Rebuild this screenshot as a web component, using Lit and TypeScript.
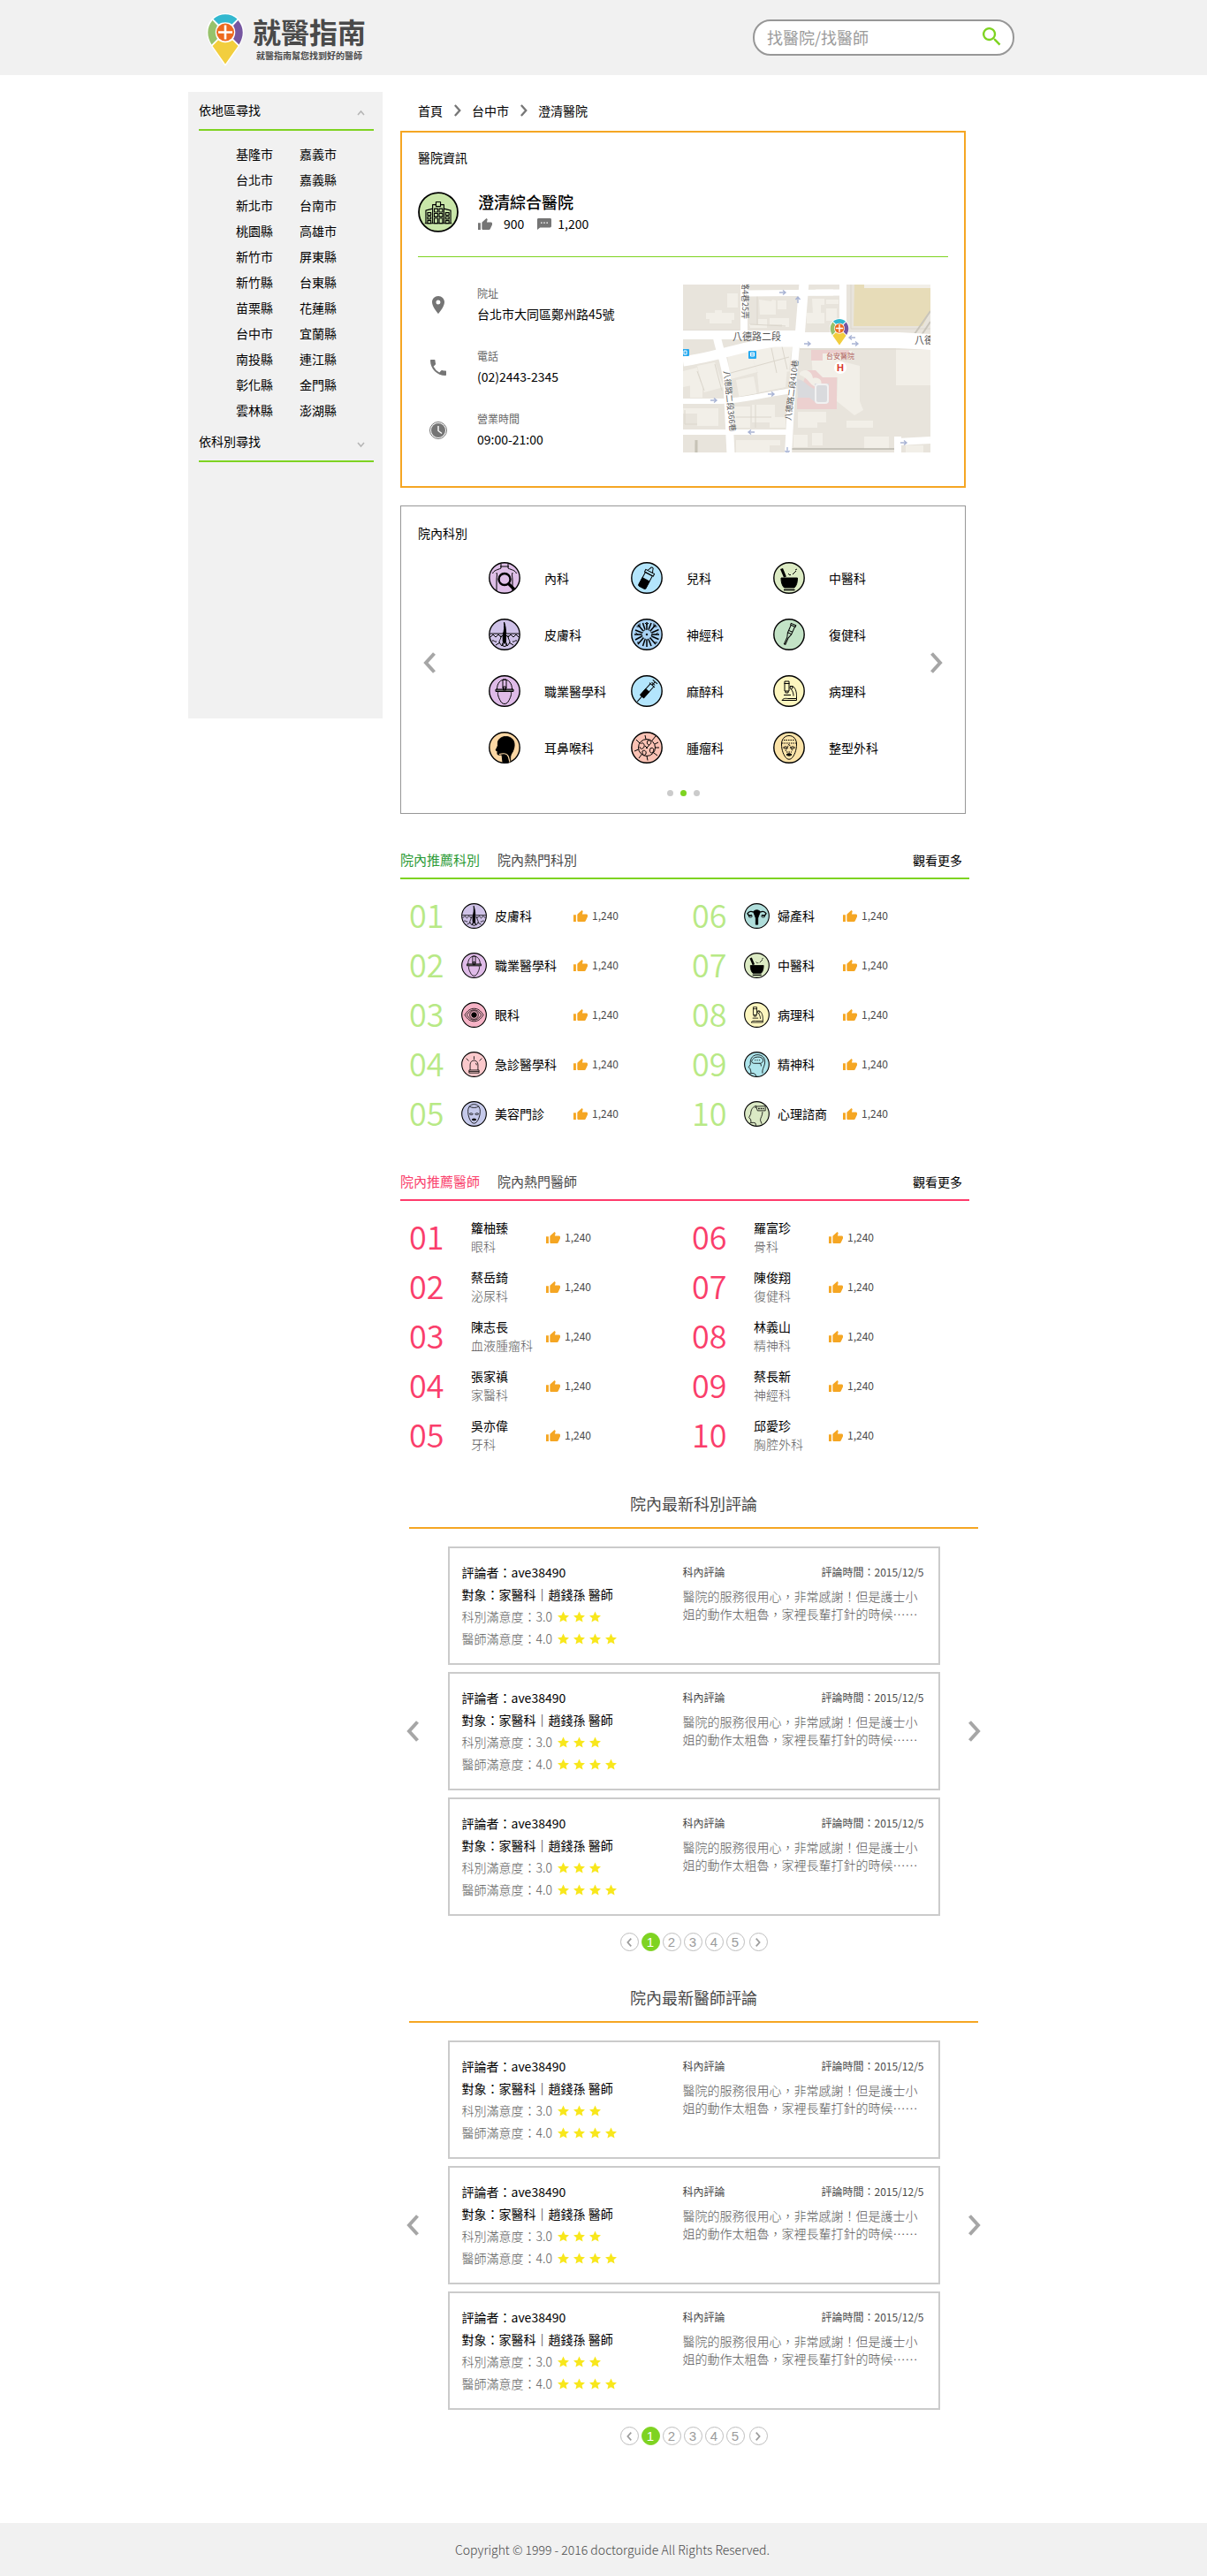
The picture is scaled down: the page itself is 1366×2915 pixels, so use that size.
import { LitElement, html, css, svg, nothing } from "lit";
import type { SVGTemplateResult } from "lit";
import { customElement, property, state } from "lit/decorators.js";
import { classMap } from "lit/directives/class-map.js";

const base = css`
  *, *::before, *::after { box-sizing: border-box; }
  button { font: inherit; color: inherit; background: none; border: 0; padding: 0; margin: 0; cursor: pointer; }
  a { color: inherit; text-decoration: none; }
  h1, h2, p, ul, ol, dl, dd { margin: 0; padding: 0; font-weight: inherit; font-size: inherit; }
  ul, ol { list-style: none; }
  svg { display: block; flex: none; }
`;

/* ---------- department glyphs, all on a 36 x 36 disc ---------- */

interface Glyph { fill: string; art: SVGTemplateResult; }

const faceArt = svg`
  <path d="M18 4.500c-5 0-8.500 4-8.500 9.500 0 7.500 2.500 12.500 5 15.500 2 2.300 5 2.300 7 0 2.500-3 5-8 5-15.500 0-5.500-3.500-9.500-8.500-9.500z"/>
  <path d="M11.500 18c1.500-1.500 4-1.500 5 .3-1.500 1.200-3.600 1.200-5-.3zM24.500 18c-1.500-1.500-4-1.500-5 .3 1.500 1.200 3.600 1.200 5-.3z"/>
  <path d="M15 26c1.500-1.600 4.500-1.600 6 0-1.500 1.500-4.500 1.500-6 0z" fill="#000"/>`;

const glyphs: Record<string, Glyph> = {
  internal: { fill: "#dfbfe8", art: svg`
    <path d="M14 2v5c-4 2-8 2-9.500 6M22 2v5c4 2 8 2 9.500 6M13 5h10M9 33V20c0-3 1-5 0-8M27 33V20c0-3-1-5 0-8"/>
    <circle cx="18" cy="19.500" r="6.500" stroke-width="2.400"/><path d="M22.500 24.500l6.500 6.500" stroke-width="3.200"/>` },
  pediatric: { fill: "#b3e5fc", art: svg`
    <g transform="rotate(28 18 18)"><path d="M13.500 13h9v15.500q0 1.500-1.500 1.500h-6q-1.500 0-1.500-1.500z"/>
    <path d="M13.500 20h9v9q0 1-1.500 1h-6q-1.500 0-1.500-1z" fill="#000"/><path d="M12.500 10h11v3h-11zM15 10c0-2 1.500-2 1.500-4.500q1.500-2 3 0c0 2.500 1.500 2.500 1.500 4.500"/></g>` },
  chinese: { fill: "#dcebc4", art: svg`
    <path d="M9 18h18.500c0 5-1 8.500-3.500 11H12.500C10 26.500 9 23 9 18z" fill="#000"/><path d="M12 31.500h12.500" stroke-width="1.600"/>
    <path d="M9.500 7.500l4 9.500" stroke-width="3.200"/><path d="M17 13l2 2 1-1M22 14l4-4M25 9l2-1"/>` },
  skin: { fill: "#cfc2e8", art: svg`
    <path d="M1.500 17h14l1-1M34.500 17h-14l-1-1M2 21l3-3 3 3 3-3 3 3 2-2M34 21l-3-3-3 3-3-3-3 3-2-2M4 25c2-1 3 2 5 1M32 25c-2-1-3 2-5 1M8 30l5-3M28 30l-5-3"/>
    <path d="M17.500 4c1.800 5 2.300 10 2 14v8l-1.500 2-1.800-2v-8c1.500-4 1.800-9 1.300-14z" fill="#000"/>
    <path d="M14 19c0 5-2 5-2 8l3 4 3-4 3 4 3-4c0-3-2-3-2-8"/><circle cx="18" cy="29" r="2.500"/>` },
  neuro: { fill: "#a9d2f5", art: svg`
    <circle cx="18" cy="18" r="5.500" stroke-dasharray="2 1"/><circle cx="18" cy="18" r=".8" fill="#000"/>
    <g stroke-width="1.500"><path d="M18 12V4M18 24v8M12 18H4M24 18h8M14 14L8 7M22 14l6-7M14 22l-6 7M22 22l6 7M16 12.500L13.500 5M20 12.500L23 5M12.500 16L5 13M12.500 20L5 24M23.500 16l8-3.500M23.500 20l8 3.500M16 23.500L13.500 31M20 23.500l3 7.500"/></g>
    <path d="M9.500 9H6.500M10 9V5.500M26.500 9h3M26 9V5.500M8 18l-2.500-2M28 18l2.500-2M9.500 27H7M26.500 27H30M18 7l-2-2M18 7l2-2"/>` },
  rehab: { fill: "#c3e3c6", art: svg`
    <g transform="rotate(24 18 18)"><path d="M15 5.500h6v1.800h-6zM15.700 7.300v9.500l1.600 5V30h1.500v-8.200l1.600-5V7.300M15.700 14h4.700M15.700 16.500h4.700M16.800 30h2.500"/></g>` },
  worker: { fill: "#dfbbe8", art: svg`
    <path d="M9.500 16c0-7 4-11 8.500-11s8.500 4 8.500 11M16 5h4v10h-4z"/><path d="M8 16h20v2.500H8z" fill="#666"/>
    <path d="M11 19c-1.500 1 0 6 2 9.500 1 2 2.500 4 5 4s4-2 5-4c2-3.500 3.500-8.500 2-9.500"/><path d="M16.500 13h3v4h-3z"/>` },
  anesthesia: { fill: "#b3e5fc", art: svg`
    <g transform="rotate(42 18 18)"><path d="M15.500 9h5v17h-5zM18 26v8M18 9V4M14.500 4h7M14 9h8"/><path d="M15.500 17h5v9h-5z" fill="#000"/><path d="M15.500 7h5"/></g>` },
  pathology: { fill: "#fdf6bf", art: svg`
    <path d="M13 7h5v11h-5zM12.500 9.500h6M14 18v2h3v-2M19 12.500h3c3 1.500 4.500 6 4.500 11v3M20 15.500c2 2 3 5 3 8M10 28.500c2-3 5-2 7-2h9.500v2zM12 22.500h8"/><circle cx="20.500" cy="14" r="1.500"/>` },
  ent: { fill: "#fbd7a4", art: svg`
    <path d="M28 10c-3-6-14-6-17 0-1.300 3 0 5-1 7l-2 4 2 .8v3.700c1 1 3 .5 5 .5l1 8.500c3 1 7 .5 9-.5-1-6 0-8 2-11 2-4 3-9 1-13z" fill="#000"/>
    <path d="M12 25.500c6-1.500 9-1 10.500 3l1.500 6" stroke="#fbd7a4" stroke-width="1.200"/>` },
  tumor: { fill: "#fbc2b4", art: svg`
    <circle cx="18" cy="18" r="9.500"/><path d="M11 14c2-3 5 0 4 3s-5 3-5 0M19 10c3-1 5 2 3 4s-5 0-3-4M22 19c3-2 5 1 3 4s-5-1-3-4M13 22c2-2 5 0 4 3s-5 1-4-3M16 16l3 3M17 19l4-4"/>
    <path d="M17 8.500L16 4M24 10l4-5M27.500 18H32M26 24l4 3M18 27.500l1 5M12 26l-3 4M8.500 20L4 22M10 13L6 9M27 14l4-2"/>` },
  plastic: { fill: "#fbe3a8", art: svg`${faceArt}<path d="M10 13h16M12 9.500h12M14 22l4-8 4 8M15 23h6M12 24l-1 1M24 24l1 1" stroke-dasharray="1.500 1"/>` },
  eye: { fill: "#f6b3c6", art: svg`
    <path d="M5 18c4-6.500 8-9 13-9s9 2.500 13 9c-4 6.500-8 9-13 9s-9-2.500-13-9z"/><path d="M8 18c3-5 6-7 10-7s7 2 10 7c-3 5-6 7-10 7s-7-2-10-7z"/>
    <circle cx="18" cy="18" r="6"/><circle cx="18" cy="18" r="3.500" fill="#000"/>` },
  emergency: { fill: "#fbc9cc", art: svg`
    <path d="M12.500 26v-7.500c0-8 11-8 11 0V26M11 26h14v4H11zM11 28h14M18 11V6.500M10.500 13L7 9.500M25.500 13L29 9.500M20 16q1.500 1 1.500 3"/>` },
  beauty: { fill: "#c5c9ea", art: svg`${faceArt}<path d="M11 7c4 3 10 3 14 0"/>` },
  gyne: { fill: "#b0dedb", art: svg`
    <path d="M13 12c3-3 7-3 10 0l-2 5-1.500 4v9h-3v-9L15 17z" fill="#000"/><path d="M13 12.500c-3-1.500-6-1-8 2 1 3 4 4 6 2M23 12.500c3-1.500 6-1 8 2-1 3-4 4-6 2" stroke-width="1.700"/>
    <ellipse cx="9" cy="18.500" rx="2.500" ry="1.500"/><ellipse cx="27" cy="18.500" rx="2.500" ry="1.500"/>` },
  psych: { fill: "#aee5ec", art: svg`
    <path d="M8 32v-1c3-1 6-1 8 1l1 2.500M10 30.500L9.500 27l-1-3-2-2 2.500-4C8 9 13 4 20 4.500c7 .5 10.500 6 9 13-1 5-4 8-3 13"/>
    <path d="M13 10c2-3 11-3.500 13 0 2 3 0 6-3 6.500h-9c-4-.5-4-4-1-6.500z"/><path d="M15 12h9" stroke-dasharray="1.500 1.500" /><path d="M22 16.500q3 1 2 4"/>` },
  counsel: { fill: "#dbe9c5", art: svg`
    <path d="M8 32v-1c3-1 7-1 8 0l1 3.500M10 30.500L9.500 26l-2.500-3 2.500-5c0-6 3-10.500 8-11.500M26 15c0 6-3 8-3 12l2 5"/>
    <path d="M17 7.500l13-.5v6.500H19z"/><path d="M20 10.500h8" stroke-width="1.800" stroke-dasharray="2 1.200"/><path d="M15 9h2"/>` },
  hospital: { fill: "#c9e6a9", art: svg`
    <g stroke-width=".9"><path d="M13 27.500V11.500h3M23 27.500V11.500h-3M16 9h4v4h-4zM7 27.500v-11l6-1.500M29 27.500v-11l-6-1.500M6 28h24"/>
    <path d="M14.500 15h3v3h-3zM18.800 15h3v3h-3zM14.500 19.200h3v3h-3zM18.800 19.200h3v3h-3zM14.500 23.500h3V28h-3zM18.800 23.500h3V28h-3zM8.500 18.500h3v2.200h-3zM8.500 22h3v2.200h-3zM8.500 25.500h3V28h-3zM24.500 18.500h3v2.200h-3zM24.500 22h3v2.200h-3zM24.500 25.500h3V28h-3z"/></g>` },
};

@customElement("dept-icon")
export class DeptIcon extends LitElement {
  @property() name = "internal";
  static styles = css`
    :host { display: block; flex: none; }
    .disc { display: block; width: 100%; height: 100%; fill: none; stroke: #000; stroke-width: 1; stroke-linejoin: round; }
  `;
  render() {
    const g = glyphs[this.name];
    return html`<svg class="disc" viewBox="0 0 36 36" aria-hidden="true">
      <circle cx="18" cy="18" r="17.200" fill=${g.fill} stroke-width="1.400"></circle>${g.art}
    </svg>`;
  }
}

/* ---------- small shared drawings ---------- */

const thumb = html`<svg class="thumb" width="16" height="13" viewBox="1 1 22 20" preserveAspectRatio="none" aria-hidden="true">
  <path fill="currentColor" d="M1 21h4V9H1v12zm22-11c0-1.100-.9-2-2-2h-6.310l.95-4.570.03-.32c0-.41-.17-.79-.44-1.060L14.170 1 7.590 7.590C7.220 7.950 7 8.450 7 9v10c0 1.100.9 2 2 2h9c.83 0 1.540-.5 1.840-1.220l3.020-7.050c.09-.23.14-.47.14-.73V10z"/>
</svg>`;

const chevron = (dir: "left" | "right", w: number, h: number) => html`<svg width=${w} height=${h} viewBox="0 0 14 24" aria-hidden="true">
  <path fill="none" stroke="currentColor" stroke-width="4" d=${dir === "left" ? "M12.500 1.500L3 12l9.500 10.500" : "M1.500 1.500L11 12 1.500 22.500"}/>
</svg>`;

const pinArt = svg`
  <path fill="#fff" d="M21 0C9.500 0 0 9 0 21c0 6 2 11 6 17.500L21 60l15-21.500C40 32 42 27 42 21 42 9 32.500 0 21 0z"/>
  <path fill="#33b8cf" d="M7.500 6.500C15-.5 27-.5 34.500 6.500L28.500 12.500c-4-3-11-3-15 0z"/>
  <path fill="#97c26b" d="M6.500 8C0 15.500-.5 26 5.500 35.500L12 29c-3-5-3-10 0-15z"/>
  <path fill="#7656a0" d="M35.500 8C42 15.500 42.500 26 36.500 35.500L30 29c3-5 3-10 0-15z"/>
  <path fill="#f2ce3e" d="M6.500 37L13 30.500c5 3.500 11 3.500 16 0l6.500 6.500L21 57.500z"/>
  <circle cx="21" cy="21.500" r="10" fill="#ee6a1f"/><path stroke="#fff" stroke-width="2.600" d="M21 13.500v16M13 21.500h16"/>`;

const star = html`<svg width="13" height="13" viewBox="0 0 24 24" aria-hidden="true"><path fill="#f8e71c" d="M12 1l3.600 7.800 8.400.8-6.300 5.600L19.500 23 12 18.800 4.500 23l1.800-7.800L0 9.600l8.400-.8z"/></svg>`;

/* ---------- map ---------- */

const arrow = (x: number, y: number, r: number) => svg`<path transform="translate(${x} ${y}) rotate(${r})" d="M-4 0h7M0-2.500L3 0 0 2.500" fill="none" stroke="#a9b4d4" stroke-width="1.400"/>`;

const mapArt = html`<svg class="map" viewBox="0 0 280 190" role="img" aria-label="台安醫院">
  <rect width="280" height="190" fill="#e8e4dc"/>
  <path fill="#e7dcb8" d="M194 0h86v30l-9 17h-78z"/>
  <path fill="#f2efe8" d="M205 0h75v4h-75zM50 10h12v16H50zM26 32h10v-3h8v3h14v8h-3v4H30v-5h-4z
    M86 17l14 2 1-2 4 1v16H87zM107 18h10v10h-10zM75 45h10v-6h10v10H76zM98 38h22v10h-8v-3h-14zM146 16h14v7h-4v10h-9zM162 27h12v14h-12zM162 17h14v5h-14zM150 5h20v8h-20zM140 32h20v12h-20z
    M50 80l24-9 10 28-30 8zM75 74l26-4 20 28-34 8zM94 68l30-2-4 30-24-2zM0 98l16-4 4 18-20 4zM16 92l20-4 10 28-22 6zM8 112l14-2v18H8zM60 108l20-4 4 22-20 4zM84 100l34-6-2 22-30 6z
    M0 140h40v20H16v-14H0zM56 138h20v24H60zM78 136h26v20H78zM98 150h18v12H98z
    M145 75h46v10h-14v20h-30zM176 86l24 6v40l4 10-10 6-20-16zM241 71h39v43h-39zM130 144h32v12h-10v6h-22zM185 154h30v8h-30zM205 172h28v14h-28zM125 170h16v14h-16zM146 168h12v14h-12zM252 182h20v8h-20zM60 176h50v6h-12v8H60z"/>
  <path fill="#ecd0cf" d="M145 74h43v4h-30v8h-13zM129 130l12-33h9l8 8h16v36h-45z"/>
  <path fill="#f2efe8" d="M132 100c6-6 14-2 15 6 8-2 12 4 8 10-10 2-12-10-23-14z"/>
  <path fill="#d9dadd" d="M129 107c8 0 12 9 20 11v-6h16v22h-14l-8-6h-13z"/>
  <rect x="150" y="113" width="14" height="21" rx="3" fill="none" stroke="#f1f1f1" stroke-width="2"/>
  <g fill="none" stroke="#dbd6cc" stroke-width="1">
    <path d="M0 52h64M190 50h90M132 73h148M14 180v10M2 142v16h14M60 150h40M82 136v26M36 90l8 30M54 100l66-18M100 72l6 28M112 70l6 26M24 120l-8-22M60 128l56-10M190 0v50M76 45l40 2M84 12v34"/>
    <path d="M262 56l18-26M268 60l12-18" stroke="#c9c5bb" stroke-width="2"/>
    <path d="M123 186h120" stroke="#b9b6ad" stroke-width="1.500"/><path d="M15 176v14" stroke="#c6c2b6" stroke-width="3"/>
  </g>
  <g fill="none" stroke="#fff">
    <path stroke-width="18" d="M132 63h112l38 2"/><path stroke-width="10" d="M0 57h134"/><path stroke-width="11" d="M0 87c40-6 70-18 104-22h30"/>
    <path stroke-width="11" d="M137-2l-5 62"/><path stroke-width="8" d="M69 0v58M181 0v58"/><path stroke-width="7" d="M70 10l110-1"/>
    <path stroke-width="9" d="M38 58c4 20 10 30 12 52l4 82"/><path stroke-width="8" d="M128 68l-6 70-3 54"/>
    <path stroke-width="6" d="M0 132h44c20 0 50-8 80-12M0 167h120"/><path stroke-width="8" d="M243 192v-20M243 178l37-2"/>
  </g>
  ${arrow(113, 9, 0)}${arrow(130, 17, -90)}${arrow(141, 67, 0)}${arrow(195, 67, 0)}${arrow(191, 60, 180)}${arrow(35, 131, 0)}${arrow(100, 124, 0)}${arrow(77, 167, 180)}${arrow(250, 179, 0)}${arrow(118, 188, 90)}
  <g fill="#26a9ef"><rect x="-2" y="73" width="9" height="8" rx="1"/><rect x="74" y="75" width="9" height="9" rx="1"/></g>
  <path stroke="#fff" fill="none" d="M1 75h3v4H1zM76.500 77h4v4h-4zM76.500 79h4"/>
  <g class="map-text">
    <text x="56" y="63">八德路二段</text><text x="262" y="67">八德</text>
    <text class="map-small" transform="translate(67 -3) rotate(90)">路4巷25弄</text>
    <text class="map-small" transform="translate(46 98) rotate(84)">八德路二段366巷</text>
    <text class="map-small" transform="translate(122 154) rotate(-83)">八德路二段410巷</text>
    <text class="map-place" x="162" y="84">台安醫院</text>
  </g>
  <circle cx="178" cy="94" r="7" fill="#fff"/><text class="map-h" x="178" y="98">H</text>
  <svg x="166" y="38" width="22" height="32" viewBox="0 0 42 60">${pinArt}</svg>
</svg>`;

/* ---------- reviews ---------- */

@customElement("review-board")
export class ReviewBoard extends LitElement {
  @property() heading = "";
  @state() private page = 1;

  static styles = [base, css`
    :host { display: block; }
    .head { height: 52px; padding-bottom: 4px; border-bottom: 2px solid #f5a623; display: flex; align-items: center; justify-content: center; font-size: 18px; color: #4a4a4a; }
    .stage { display: flex; align-items: center; justify-content: space-between; margin: 20px -3px 0; color: #a6a6a6; }
    .list { flex: 0 1 557px; display: grid; gap: 8px; }
    .card { border: 2px solid #cbcbcb; padding: 15px 16px 15px 14px; display: grid; grid-template-columns: 250px minmax(0, 1fr); line-height: 25px; font-size: 14px; color: #000; }
    .score { display: flex; align-items: center; color: #5a5a5a; font-weight: 300; }
    .stars { display: flex; gap: 5px; margin-left: 6px; }
    .meta { display: flex; justify-content: space-between; font-size: 12px; color: #4a4a4a; line-height: 24px; }
    .text { margin-top: 5px; line-height: 20px; color: #5a5a5a; font-weight: 300; }
    .pager { display: flex; justify-content: center; gap: 3px; margin-top: 19px; }
    .num { width: 21px; height: 21px; border: 1px solid #bdbdbd; border-radius: 50%; display: flex; align-items: center; justify-content: center; font: 15px "Liberation Sans", Arial, sans-serif; color: #9b9b9b; }
    .next { margin-left: 2px; }
    .current { background: #7ed321; border-color: #7ed321; color: #fff; }
  `];

  render() {
    const score = (label: string, value: number) => html`<p class="score">${label}：${value.toFixed(1)}
      <span class="stars">${Array.from({ length: value }, () => star)}</span></p>`;
    return html`
      <h2 class="head">${this.heading}</h2>
      <div class="stage">
        <button aria-label="上一則">${chevron("left", 14, 24)}</button>
        <div class="list">${[0, 1, 2].map(() => html`
          <article class="card">
            <div>
              <p>評論者：ave38490</p>
              <p>對象：家醫科｜趙錢孫 醫師</p>
              ${score("科別滿意度", 3)}${score("醫師滿意度", 4)}
            </div>
            <div>
              <p class="meta"><span>科內評論</span><span>評論時間：2015/12/5</span></p>
              <p class="text">醫院的服務很用心，非常感謝！但是護士小姐的動作太粗魯，家裡長輩打針的時候⋯⋯</p>
            </div>
          </article>`)}
        </div>
        <button aria-label="下一則">${chevron("right", 14, 24)}</button>
      </div>
      <nav class="pager" aria-label="分頁">
        <button class="num" aria-label="上一頁">${chevron("left", 6, 10)}</button>
        ${[1, 2, 3, 4, 5].map((n) => html`<button class=${classMap({ num: true, current: n === this.page })} @click=${() => (this.page = n)}>${n}</button>`)}
        <button class="num next" aria-label="下一頁">${chevron("right", 6, 10)}</button>
      </nav>`;
  }
}

/* ---------- rankings ---------- */

interface Rank { name: string; icon?: string; sub?: string; }

@customElement("rank-board")
export class RankBoard extends LitElement {
  @property({ attribute: false }) tabs: string[] = [];
  @property({ attribute: false }) items: Rank[] = [];
  @property({ reflect: true }) kind: "dept" | "doctor" = "dept";

  static styles = [base, css`
    :host { display: block; --accent: #7ed321; --active: #2b9a35; --number: #b8e986; }
    :host([kind="doctor"]) { --accent: #ff3b6b; --active: #fa3e6b; --number: #fa3e6b; }
    .head { display: flex; align-items: center; gap: 20px; height: 43px; border-bottom: 2px solid var(--accent); font-size: 15px; color: #4a4a4a; }
    .active { color: var(--active); }
    .more { margin-left: auto; margin-right: 8px; font-size: 14px; color: #000; }
    .columns { display: grid; grid-template-columns: repeat(2, minmax(0, 320px)); padding: 13px 0 0 10px; margin-right: -6px; }
    .row { display: grid; grid-template-columns: 59px 38px 89px 1fr; align-items: center; height: 56px; font-size: 14px; }
    .late .row { grid-template-columns: 59px 38px 74px 1fr; }
    :host([kind="doctor"]) .row { grid-template-columns: 70px 85px 1fr; }
    .number { align-self: start; font-size: 36px; line-height: 52px; font-weight: 350; color: var(--number); }
    .icon { width: 29px; height: 29px; }
    .who { line-height: 21px; }
    .sub { display: block; color: #5a5a5a; font-weight: 300; }
    .votes { display: flex; align-items: center; gap: 5px; font-size: 12px; color: #4a4a4a; }
    .thumb { color: #f5a623; }
  `];

  render() {
    const col = (from: number) => html`<ol class=${classMap({ late: from > 0 })}>
      ${this.items.slice(from, from + 5).map((it, i) => html`<li class="row">
        <span class="number">${String(from + i + 1).padStart(2, "0")}</span>
        ${it.icon ? html`<dept-icon class="icon" name=${it.icon}></dept-icon>` : nothing}
        <a class="who" href="#">${it.name}${it.sub ? html`<span class="sub">${it.sub}</span>` : nothing}</a>
        <span class="votes">${thumb}1,240</span>
      </li>`)}</ol>`;
    return html`
      <div class="head">
        ${this.tabs.map((t, i) => html`<button class=${i === 0 ? "active" : ""}>${t}</button>`)}
        <a class="more" href="#">觀看更多</a>
      </div>
      <div class="columns">${col(0)}${col(5)}</div>`;
  }
}

/* ---------- page ---------- */

const cities = [
  ["基隆市", "嘉義市"], ["台北市", "嘉義縣"], ["新北市", "台南市"], ["桃園縣", "高雄市"], ["新竹市", "屏東縣"], ["新竹縣", "台東縣"],
  ["苗栗縣", "花蓮縣"], ["台中市", "宜蘭縣"], ["南投縣", "連江縣"], ["彰化縣", "金門縣"], ["雲林縣", "澎湖縣"],
];

const departments: [string, string][] = [
  ["internal", "內科"], ["pediatric", "兒科"], ["chinese", "中醫科"],
  ["skin", "皮膚科"], ["neuro", "神經科"], ["rehab", "復健科"],
  ["worker", "職業醫學科"], ["anesthesia", "麻醉科"], ["pathology", "病理科"],
  ["ent", "耳鼻喉科"], ["tumor", "腫瘤科"], ["plastic", "整型外科"],
];

const topDepartments: Rank[] = [
  { name: "皮膚科", icon: "skin" }, { name: "職業醫學科", icon: "worker" }, { name: "眼科", icon: "eye" },
  { name: "急診醫學科", icon: "emergency" }, { name: "美容門診", icon: "beauty" }, { name: "婦產科", icon: "gyne" },
  { name: "中醫科", icon: "chinese" }, { name: "病理科", icon: "pathology" }, { name: "精神科", icon: "psych" }, { name: "心理諮商", icon: "counsel" },
];

const topDoctors: Rank[] = [
  { name: "籮柚臻", sub: "眼科" }, { name: "蔡岳錡", sub: "泌尿科" }, { name: "陳志長", sub: "血液腫瘤科" },
  { name: "張家禛", sub: "家醫科" }, { name: "吳亦偉", sub: "牙科" }, { name: "羅富珍", sub: "骨科" },
  { name: "陳俊翔", sub: "復健科" }, { name: "林義山", sub: "精神科" }, { name: "蔡長新", sub: "神經科" }, { name: "邱愛珍", sub: "胸腔外科" },
];

const facts: { label: string; value: string; art: SVGTemplateResult }[] = [
  { label: "院址", value: "台北市大同區鄭州路45號", art: svg`<path d="M12 2C8.130 2 5 5.130 5 9c0 5.250 7 13 7 13s7-7.750 7-13c0-3.870-3.130-7-7-7zm0 9.500a2.500 2.500 0 1 1 0-5 2.500 2.500 0 0 1 0 5z"/>` },
  { label: "電話", value: "(02)2443-2345", art: svg`<path d="M6.620 10.790a15.150 15.150 0 0 0 6.590 6.590l2.200-2.200c.28-.28.67-.36 1.020-.25 1.120.37 2.320.57 3.570.57.55 0 1 .45 1 1V20c0 .55-.45 1-1 1C10.610 21 3 13.390 3 4c0-.55.45-1 1-1h3.500c.55 0 1 .45 1 1 0 1.250.2 2.450.57 3.570.11.35.03.74-.25 1.020l-2.200 2.200z"/>` },
  { label: "營業時間", value: "09:00-21:00", art: svg`<circle cx="12" cy="12" r="9.500" fill="none" stroke="#757575"/><circle cx="12" cy="12" r="8"/><path d="M12 7v5.500l4 3" fill="none" stroke="#fff" stroke-width="1.400"/>` },
];

@customElement("app-root")
export class AppRoot extends LitElement {
  static styles = [base, css`
    :host { display: block; background: #fff; color: #000; font: 14px/20px "Noto Sans CJK TC", "Noto Sans", sans-serif; }
    .wrap { max-width: 940px; margin: 0 auto; }
    .header { background: #f1f1f1; }
    .header-row { display: flex; align-items: center; height: 85px; padding: 4px 5px 0 21px; }
    .brand { display: flex; gap: 10px; color: #4a4a4a; text-align: center; font-weight: 700; }
    .brand-name { display: block; font-size: 32px; line-height: 40px; }
    .brand-tag { display: block; font-size: 10px; line-height: 16px; }
    .search { margin: 0 0 4px auto; width: 296px; height: 41px; display: flex; align-items: center; padding: 0 13px 2px 14px; background: #fff; border: 2px solid #979797; border-radius: 20px; }
    .search-input { flex: 1; min-width: 0; border: 0; outline: 0; padding: 0; background: none; font: inherit; font-size: 18px; line-height: 26px; }
    .search-input::placeholder { color: #9b9b9b; opacity: 1; }

    .body { display: grid; grid-template-columns: 220px minmax(0, 1fr); gap: 20px; padding: 19px 0 88px; align-items: start; }
    .side { background: #f1f1f1; padding: 0 10px 290px 12px; }
    .side-head { width: 100%; height: 44px; display: flex; align-items: center; justify-content: space-between; border-bottom: 2px solid #7ed321; padding: 0 10px 2px 0; }
    .side-mark { color: #b5b5b5; }
    .cities { display: grid; grid-template-columns: 72px 60px; padding: 12px 0 0 42px; line-height: 29px; }

    .main { padding-right: 56px; }
    .crumbs { display: flex; align-items: center; height: 44px; padding: 0 0 2px 20px; }
    .crumb-mark { margin: 0 12px 0 13px; color: #757575; }
    .panel { margin-right: 4px; }
    .info { border: 2px solid #f5a623; padding: 18px 18px 38px; }
    .hospital { display: flex; gap: 22px; align-items: center; margin-top: 27px; padding-bottom: 25px; border-bottom: 1px solid #7ed321; }
    .hospital-icon { width: 46px; height: 46px; }
    .hospital-name { font-size: 18px; line-height: 26px; font-weight: 500; }
    .counts { display: flex; align-items: center; line-height: 24px; color: #000; }
    .mark { color: #757575; }
    .likes { margin: 0 15px 0 13px; }
    .talks { margin-left: 7px; }
    .details { display: flex; justify-content: space-between; margin-top: 31px; padding: 0 20px 0 11px; }
    .facts { display: grid; gap: 25px; align-content: start; }
    .fact { display: grid; grid-template-columns: 24px 1fr; column-gap: 32px; align-items: center; }
    .fact-icon { fill: #757575; grid-row: span 2; }
    .fact-label { font-size: 12px; color: #666; line-height: 20px; }
    .fact-value { line-height: 26px; }
    .map { width: 280px; height: 190px; }
    .map-text { fill: #555; font-size: 11px; }
    .map-small { font-size: 9px; }
    .map-place { font-size: 8px; fill: #b0605c; }
    .map-h { font: 700 11px "Liberation Sans", Arial, sans-serif; fill: #d9372c; text-anchor: middle; }

    .depts { border: 1px solid #979797; padding: 20px 19px 19px; margin-top: 20px; }
    .carousel { display: flex; align-items: center; justify-content: space-between; margin-top: 9px; padding: 0 6px; color: #a6a6a6; }
    .dept-grid { flex: 1; display: grid; grid-template-columns: repeat(3, 161px); padding-left: 60px; color: #000; }
    .dept { display: flex; align-items: center; gap: 27px; height: 64px; white-space: nowrap; }
    .dept-mark { width: 36px; height: 36px; }
    .dots { display: flex; justify-content: center; gap: 8px; margin-top: 16px; }
    .dot { width: 7px; height: 7px; border-radius: 50%; background: #cbcbcb; }
    .dot-on { background: #7ed321; }

    .rank { max-width: 644px; }
    .first-rank { margin-top: 31px; }
    .next-rank { margin-top: 28px; }
    .reviews { max-width: 644px; margin: 26px -14px 0 10px; }
    .reviews + .reviews { margin-top: 29px; }

    .footer { background: #f1f1f1; }
    .footer-text { padding: 20px 0 20px 20px; text-align: center; color: #4a4a4a; font-weight: 300; }
  `];

  private sideHead(label: string, open: boolean) {
    return html`<button class="side-head" aria-expanded=${open}>${label}
      <svg class="side-mark" width="9" height="16" viewBox="0 0 9 16" aria-hidden="true">
        <path fill="none" stroke="currentColor" stroke-width="1.500" d=${open ? "M1 14l3.500-4L8 14" : "M1 10l3.500 4L8 10"}/></svg>
    </button>`;
  }

  render() {
    const crumbMark = html`<span class="crumb-mark">${chevron("right", 8, 14)}</span>`;
    return html`
      <header class="header"><div class="wrap header-row">
        <a class="brand" href="#">
          <svg width="42" height="60" viewBox="0 0 42 60" aria-hidden="true">${pinArt}</svg>
          <span><span class="brand-name">就醫指南</span><span class="brand-tag">就醫指南幫您找到好的醫師</span></span>
        </a>
        <form class="search" role="search" @submit=${(e: Event) => e.preventDefault()}>
          <input class="search-input" type="text" aria-label="找醫院/找醫師" placeholder="找醫院/找醫師">
          <button aria-label="搜尋"><svg width="21" height="21" viewBox="3 3 18 18" aria-hidden="true"><path fill="#7ed321" d="M15.500 14h-.79l-.28-.27A6.500 6.500 0 1 0 13.730 14.430l.27.28v.79l5 4.990L20.490 19l-4.990-5zm-6 0a4.500 4.500 0 1 1 0-9 4.500 4.500 0 0 1 0 9z"/></svg></button>
        </form>
      </div></header>

      <div class="wrap body">
        <aside class="side">
          ${this.sideHead("依地區尋找", true)}
          <div class="cities">${cities.flat().map((c) => html`<a href="#">${c}</a>`)}</div>
          ${this.sideHead("依科別尋找", false)}
        </aside>

        <main class="main">
          <nav class="crumbs" aria-label="路徑"><a href="#">首頁</a>${crumbMark}<a href="#">台中市</a>${crumbMark}<a href="#">澄清醫院</a></nav>

          <section class="panel info">
            <h2>醫院資訊</h2>
            <div class="hospital">
              <dept-icon class="hospital-icon" name="hospital"></dept-icon>
              <div>
                <h1 class="hospital-name">澄清綜合醫院</h1>
                <div class="counts"><span class="mark">${thumb}</span><span class="likes">900</span>
                  <svg class="mark" width="16" height="13" viewBox="2 2 20 20" preserveAspectRatio="none" aria-hidden="true"><path fill="currentColor" fill-rule="evenodd" d="M20 2H4a2 2 0 0 0-2 2v18l4-4h14a2 2 0 0 0 2-2V4a2 2 0 0 0-2-2zM7 9h2v2H7zm4 0h2v2h-2zm4 0h2v2h-2z"/></svg>
                  <span class="talks">1,200</span></div>
              </div>
            </div>
            <div class="details">
              <div class="facts">${facts.map((f) => html`<div class="fact">
                <svg class="fact-icon" width="24" height="24" viewBox="0 0 24 24" aria-hidden="true">${f.art}</svg>
                <span class="fact-label">${f.label}</span><span class="fact-value">${f.value}</span></div>`)}</div>
              ${mapArt}
            </div>
          </section>

          <section class="panel depts">
            <h2>院內科別</h2>
            <div class="carousel">
              <button aria-label="上一頁">${chevron("left", 14, 24)}</button>
              <div class="dept-grid">${departments.map(([icon, name]) => html`<a class="dept" href="#"><dept-icon class="dept-mark" name=${icon}></dept-icon>${name}</a>`)}</div>
              <button aria-label="下一頁">${chevron("right", 14, 24)}</button>
            </div>
            <div class="dots">${[0, 1, 2].map((i) => html`<button class=${classMap({ dot: true, "dot-on": i === 1 })} aria-label="第 ${i + 1} 頁"></button>`)}</div>
          </section>

          <rank-board class="rank first-rank" kind="dept" .tabs=${["院內推薦科別", "院內熱門科別"]} .items=${topDepartments}></rank-board>
          <rank-board class="rank next-rank" kind="doctor" .tabs=${["院內推薦醫師", "院內熱門醫師"]} .items=${topDoctors}></rank-board>
          <review-board class="reviews" heading="院內最新科別評論"></review-board>
          <review-board class="reviews" heading="院內最新醫師評論"></review-board>
        </main>
      </div>

      <footer class="footer"><p class="wrap footer-text">Copyright © 1999 - 2016 doctorguide All Rights Reserved.</p></footer>
    `;
  }
}
